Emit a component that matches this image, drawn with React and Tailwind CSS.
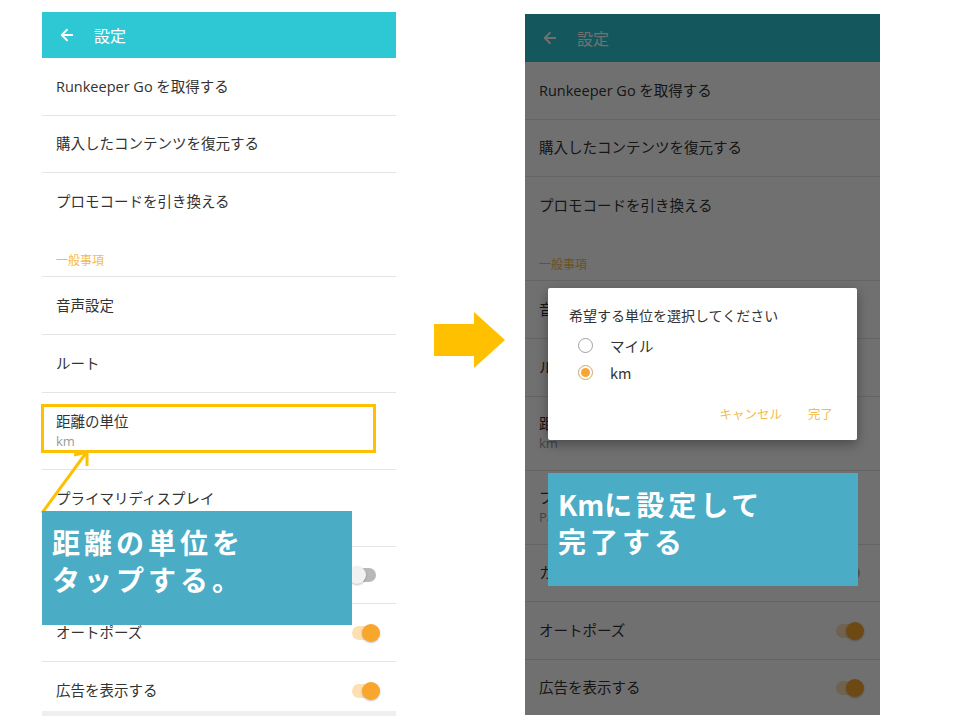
import React from "react";
import { ArrowLeft } from "lucide-react";

const JP = { fontFamily: '"Noto Sans CJK JP", "Noto Sans", sans-serif' };
const LIST = { fontFamily: '"Open Sans", "Noto Sans CJK JP", sans-serif' };

function Toggle({ on }) {
  return (
    <div className="relative w-[32px] h-[20px] shrink-0">
      <div
        className={
          "absolute left-[4px] right-[4px] top-[3px] h-[14px] rounded-full " +
          (on ? "bg-[#fde0b2]" : "bg-[#b8b8b8]")
        }
      />
      <div
        className={
          "absolute top-[1px] w-[18px] h-[18px] rounded-full shadow-[0_1px_2px_rgba(0,0,0,0.25)] " +
          (on ? "right-0 bg-[#f9a62c]" : "left-0 bg-[#f1f1f1]")
        }
      />
    </div>
  );
}

function Row({ title, sub, toggle, h = 58, last, top }) {
  return (
    <div
      className={
        "flex justify-between pl-[14px] pr-[16px] " +
        (top ? "items-start pt-[19px] " : "items-center ") +
        (last ? "" : "border-b border-[#e4e4e4]")
      }
      style={{ height: h }}
    >
      <div className="flex flex-col">
        <span className="text-[14.5px] leading-[20px] text-[#333333]" style={LIST}>{title}</span>
        {sub && (
          <span className="text-[13px] leading-[19px] text-[#9a9a9a]" style={LIST}>
            {sub}
          </span>
        )}
      </div>
      {toggle !== undefined && <Toggle on={toggle} />}
    </div>
  );
}

function Phone({ headerH, twoH, lastH, lastTop, width }) {
  return (
    <div className="flex flex-col bg-white" style={{ width, ...JP }}>
      <div
        className="flex items-center bg-[#2ec8d5] text-white pl-[16px]"
        style={{ height: headerH }}
      >
        <ArrowLeft size={18} strokeWidth={2.4} />
        <span className="ml-[18px] text-[16px]">設定</span>
      </div>
      <Row title="Runkeeper Go を取得する" />
      <Row title="購入したコンテンツを復元する" h={57} />
      <Row title="プロモコードを引き換える" last />
      <div className="h-[46px] flex items-end pb-[7px] pl-[14px] border-b border-[#e4e4e4]">
        <span className="text-[12px] text-[#f5bb4a]">一般事項</span>
      </div>
      <Row title="音声設定" />
      <Row title="ルート" />
      <Row title="距離の単位" sub="km" h={twoH} />
      <Row title="プライマリディスプレイ" sub="Pace" h={twoH} />
      <Row title="カウントダウン" toggle={false} h={57} />
      <Row title="オートポーズ" toggle={true} />
      <Row title="広告を表示する" toggle={true} h={lastH} top={lastTop} last />
    </div>
  );
}

function Callout({ children, className }) {
  return (
    <div
      className={"absolute bg-[#4bacc6] text-white font-bold text-[28px] leading-[37px] tracking-[4px] " + className}
      style={JP}
    >
      {children}
    </div>
  );
}

function Radio({ checked, label }) {
  return (
    <div className="flex items-center h-[27px]">
      <div
        className={
          "w-[15px] h-[15px] rounded-full border-[1.5px] flex items-center justify-center ml-[9px] " +
          (checked ? "border-[#c9a76a]" : "border-[#a0a0a0]")
        }
      >
        {checked && <div className="w-[9px] h-[9px] rounded-full bg-[#f7a731]" />}
      </div>
      <span className="ml-[17px] text-[14.5px] text-[#333333]">{label}</span>
    </div>
  );
}

export default function App() {
  return (
    <div className="relative w-[960px] h-[720px] bg-white overflow-hidden">
      <div className="flex items-start pl-[42px]">
        <div className="mt-[12px] flex flex-col">
          <Phone headerH={46} twoH={77} lastH={49} lastTop width={354} />
          <div className="h-[5px] bg-[#efefef]" />
        </div>

        {/* transition arrow between the two screens */}
        <svg width="71" height="56" viewBox="0 0 71 56" className="mt-[312px] ml-[38px]">
          <polygon points="0,12 40,12 40,0 71,28 40,56 40,44 0,44" fill="#ffc000" />
        </svg>

        <div className="relative ml-[20px] mt-[14px] w-[355px] h-[701px] overflow-hidden">
          <Phone headerH={48} twoH={74} lastH={56} width={355} />
          <div className="absolute inset-0 bg-black/[0.56]" />
        </div>
      </div>

      {/* highlight on the distance-unit row */}
      <div className="absolute left-[41px] top-[404px] w-[335px] h-[49px] border-[3px] border-[#ffc000]" />
      <svg className="absolute left-[30px] top-[440px]" width="80" height="80" viewBox="0 0 80 80">
        <line x1="12" y1="73" x2="56" y2="13" stroke="#ffc000" strokeWidth="3" />
        <polyline points="44,15 57,12 57,26" fill="none" stroke="#ffc000" strokeWidth="3" />
      </svg>

      <Callout className="left-[42px] top-[511px] w-[310px] h-[114px] pl-[10px] pt-[13px]">
        <div>距離の単位を</div>
        <div>タップする。</div>
      </Callout>

      {/* unit selection dialog */}
      <div
        className="absolute left-[548px] top-[288px] w-[309px] h-[152px] bg-white shadow-[0_4px_12px_rgba(0,0,0,0.35)] rounded-[2px] pl-[21px] pr-[24px] pt-[16px] flex flex-col"
        style={JP}
      >
        <div className="text-[14px] leading-[22px] text-[#333333]">希望する単位を選択してください</div>
        <div className="mt-[6px] flex flex-col">
          <Radio label="マイル" />
          <Radio label="km" checked />
        </div>
        <div className="mt-[19px] flex justify-end gap-[26px] text-[12.5px] text-[#f5bb4a]">
          <span>キャンセル</span>
          <span>完了</span>
        </div>
      </div>

      <Callout className="left-[548px] top-[473px] w-[310px] h-[113px] pl-[10px] pt-[13px]">
        <div>
          <span className="tracking-normal">Km</span>に設定して
        </div>
        <div>完了する</div>
      </Callout>
    </div>
  );
}
